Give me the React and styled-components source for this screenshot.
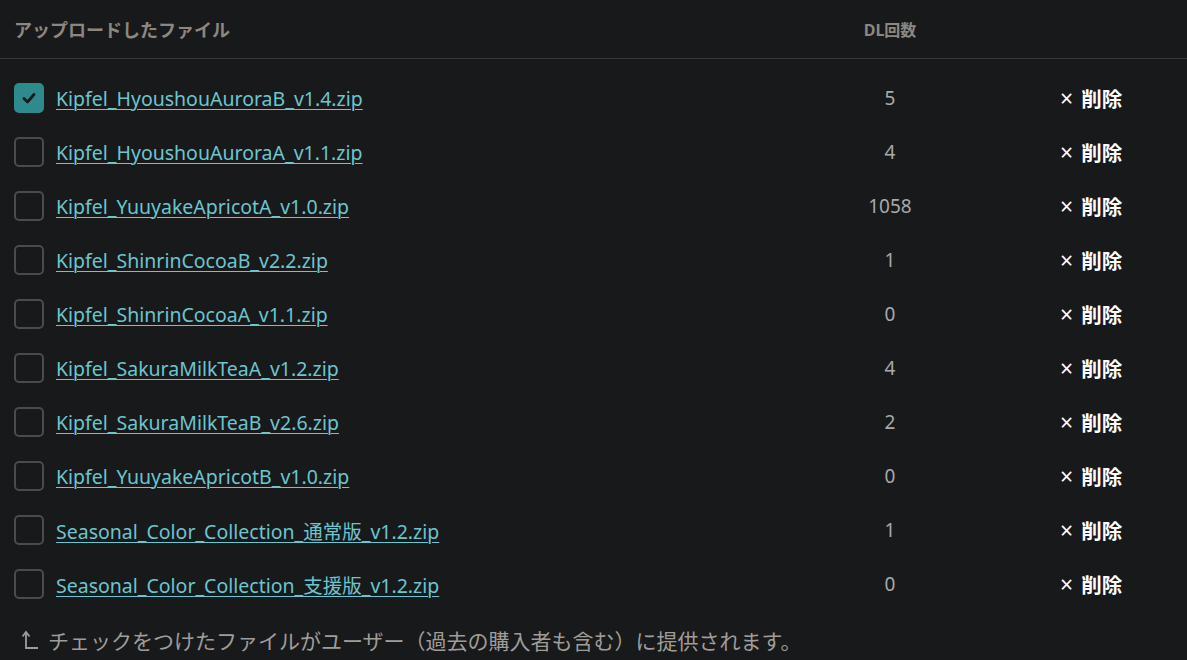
import React from "react";
import styled, { createGlobalStyle } from "styled-components";

const Global = createGlobalStyle`
  html, body { margin: 0; padding: 0; background: #18191b; }
  body { font-family: "Noto Sans", "Noto Sans CJK JP", sans-serif; }
`;

const Page = styled.div`
  width: 1187px;
  height: 660px;
  background: #18191b;
  overflow: hidden;
  box-sizing: border-box;
`;

const Grid = styled.div`
  display: grid;
  grid-template-columns: 830px 120px 1fr;
`;

const HeaderRow = styled.div`
  display: contents;
`;

const HeadCell = styled.div`
  height: 58px;
  display: flex;
  align-items: center;
  justify-content: ${(p) => (p.$center ? "center" : "flex-start")};
  padding-left: ${(p) => (p.$center ? "0" : "14px")};
  font-size: ${(p) => (p.$center ? "16px" : "18px")};
  font-weight: 700;
  color: #8d8781;
  border-bottom: 1px solid #38393b;
`;

const Spacer = styled.div`
  grid-column: 1 / -1;
  height: 12px;
`;

const Cell = styled.div`
  height: 54px;
  display: flex;
  align-items: center;
  justify-content: ${(p) => (p.$center ? "center" : "flex-start")};
`;

const FileCell = styled(Cell)`
  padding-left: 14px;
  gap: 12px;
`;

const Box = styled.span`
  width: 30px;
  height: 30px;
  box-sizing: border-box;
  border-radius: 5px;
  border: 2px solid ${(p) => (p.$checked ? "#2f8a8e" : "#4a4b4d")};
  background: ${(p) => (p.$checked ? "#2f8a8e" : "transparent")};
  display: flex;
  align-items: center;
  justify-content: center;
  flex-shrink: 0;
`;

const FileLink = styled.a`
  color: #6cc5cf;
  font-size: 19.5px;
  text-decoration: underline;
  text-underline-offset: 3px;
  text-decoration-thickness: 1px;
  cursor: pointer;
`;

const Count = styled(Cell)`
  color: #a9a9a9;
  font-size: 19px;
`;

const DeleteCell = styled(Cell)`
  padding-left: 110px;
`;

const DeleteBtn = styled.button`
  background: none;
  border: none;
  padding: 0;
  color: #ffffff;
  font-family: inherit;
  font-size: 20.5px;
  font-weight: 700;
  display: flex;
  align-items: center;
  gap: 8px;
  cursor: pointer;
`;

const Times = styled.span`
  font-size: 23px;
  font-weight: 400;
  line-height: 1;
`;

const Footer = styled.div`
  display: flex;
  align-items: center;
  gap: 8px;
  padding-left: 22px;
  height: 30px;
  margin-top: 14px;
  color: #a09d98;
  font-size: 21px;
`;

const files = [
  ["Kipfel_HyoushouAuroraB_v1.4.zip", 5, true],
  ["Kipfel_HyoushouAuroraA_v1.1.zip", 4],
  ["Kipfel_YuuyakeApricotA_v1.0.zip", 1058],
  ["Kipfel_ShinrinCocoaB_v2.2.zip", 1],
  ["Kipfel_ShinrinCocoaA_v1.1.zip", 0],
  ["Kipfel_SakuraMilkTeaA_v1.2.zip", 4],
  ["Kipfel_SakuraMilkTeaB_v2.6.zip", 2],
  ["Kipfel_YuuyakeApricotB_v1.0.zip", 0],
  ["Seasonal_Color_Collection_通常版_v1.2.zip", 1],
  ["Seasonal_Color_Collection_支援版_v1.2.zip", 0],
];

const Check = () => (
  <svg width="16" height="16" viewBox="0 0 16 16">
    <polyline points="3,8.5 6.5,12 13,4.5" fill="none" stroke="#18191b" strokeWidth="2.8" strokeLinecap="round" strokeLinejoin="round" />
  </svg>
);

const BendArrow = () => (
  <svg width="18" height="22" viewBox="0 0 18 22">
    <polyline points="4,4 4,19 16,19" fill="none" stroke="#a09d98" strokeWidth="1.8" />
    <polyline points="0.5,7.5 4,3 7.5,7.5" fill="none" stroke="#a09d98" strokeWidth="1.8" />
  </svg>
);

export default function App() {
  return (
    <Page>
      <Global />
      <Grid>
        <HeaderRow>
          <HeadCell>アップロードしたファイル</HeadCell>
          <HeadCell $center>DL回数</HeadCell>
          <HeadCell />
        </HeaderRow>
        <Spacer />
        {files.map(([name, count, checked]) => (
          <React.Fragment key={name}>
            <FileCell>
              <Box $checked={checked}>{checked && <Check />}</Box>
              <FileLink>{name}</FileLink>
            </FileCell>
            <Count $center>{count}</Count>
            <DeleteCell>
              <DeleteBtn>
                <Times>×</Times>削除
              </DeleteBtn>
            </DeleteCell>
          </React.Fragment>
        ))}
      </Grid>
      <Footer>
        <BendArrow />
        チェックをつけたファイルがユーザー（過去の購入者も含む）に提供されます。
      </Footer>
    </Page>
  );
}
